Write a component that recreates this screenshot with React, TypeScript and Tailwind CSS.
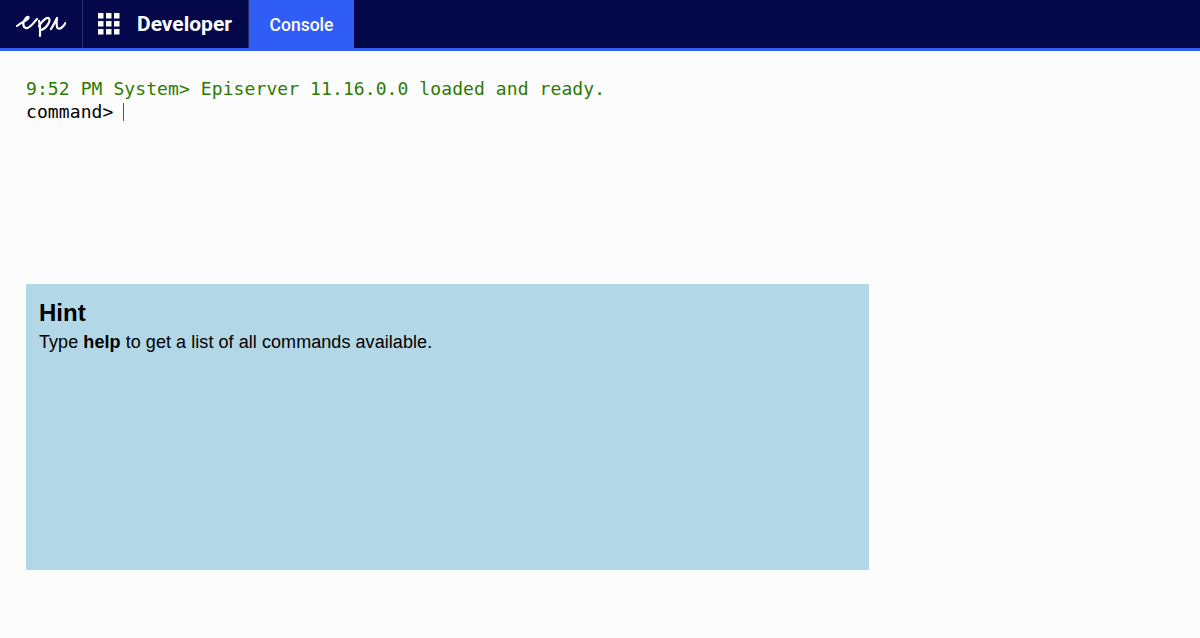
import React from 'react';

const EpiLogo = () => (
  <svg width="50" height="24" viewBox="16 14 50 24" fill="none" stroke="white" strokeWidth="2.2" strokeLinecap="round" strokeLinejoin="round">
    <path d="M17 26 C20 23.5 24 21.5 27 19.5 C30 17 28 16 26 18 C23 21 22 27 26 28 C30 29 34 22 37 19" />
    <path d="M39 21 C40.5 26 40 31 40 36" />
    <path d="M39 26 C42 21 47 16.5 49 18.5 C51 21 46 29 41 30" />
    <path d="M51 29 C53 26 55 22 57 18 C56.5 22 56 26 57.5 28 C60 30 63 27 65.5 23" />
  </svg>
);

const GridIcon = () => (
  <svg width="22" height="22" viewBox="0 0 22 22" fill="white">
    <rect x="0" y="0" width="5.5" height="5.5" />
    <rect x="8" y="0" width="5.5" height="5.5" />
    <rect x="16" y="0" width="5.5" height="5.5" />
    <rect x="0" y="8" width="5.5" height="5.5" />
    <rect x="8" y="8" width="5.5" height="5.5" />
    <rect x="16" y="8" width="5.5" height="5.5" />
    <rect x="0" y="16" width="5.5" height="5.5" />
    <rect x="8" y="16" width="5.5" height="5.5" />
    <rect x="16" y="16" width="5.5" height="5.5" />
  </svg>
);

export default function App() {
  return (
    <div className="min-h-[638px] h-[638px] overflow-hidden bg-[#fcfcfc] font-['Liberation_Sans',Arial,sans-serif]">
      {/* Top nav */}
      <nav className="flex h-[51px] bg-[#04084a] border-b-[3px] border-[#2f5df5] font-['Roboto',sans-serif] text-white">
        <div className="flex w-[83px] items-center border-r border-[#2a2f6b] pl-[16px] pt-[4px]">
          <EpiLogo />
        </div>
        <div className="flex w-[166px] items-center border-r border-[#2a2f6b] pl-[15px]">
          <GridIcon />
          <span className="ml-[17px] mt-[2px] text-[21px] font-bold">Developer</span>
        </div>
        <div className="flex w-[105px] items-center justify-center bg-[#2f5df5] text-[17.5px] font-medium">
          <span className="mt-[2px]">Console</span>
        </div>
      </nav>

      <main className="px-[26px] pt-[26px]">
        {/* Console output */}
        <div className="h-[207px] font-['DejaVu_Sans_Mono',monospace] text-[18px] leading-[23px] tracking-[0.09px]">
          <div className="text-[#2c7a00]">9:52 PM System&gt; Episerver 11.16.0.0 loaded and ready.</div>
          <div className="flex items-center text-black">
            command&gt;
            <span className="ml-[10px] h-[18px] w-px bg-[#555]" />
          </div>
        </div>

        {/* Hint */}
        <section className="h-[286px] w-[843px] bg-[#b2d7e7] px-[13px] pt-[14px] text-black">
          <h2 className="text-[24px] leading-[30px] font-bold">Hint</h2>
          <p className="mt-[2px] text-[18px] leading-[24px] tracking-[0.06px]">
            Type <strong>help</strong> to get a list of all commands available.
          </p>
        </section>
      </main>
    </div>
  );
}
